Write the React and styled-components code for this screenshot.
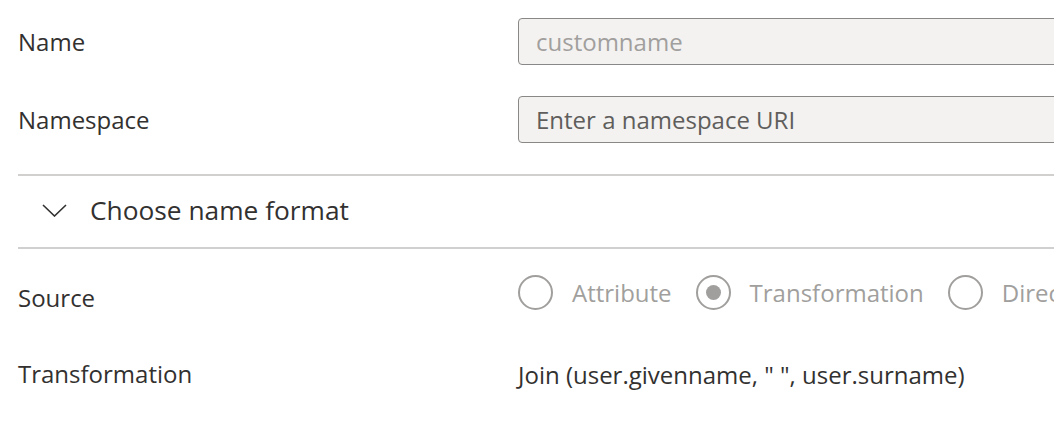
import React from "react";
import styled, { createGlobalStyle } from "styled-components";

const Global = createGlobalStyle`
  html, body { margin: 0; padding: 0; background: #ffffff; overflow: hidden; }
  body { font-family: "Open Sans", "Noto Sans", sans-serif; color: #323130; }
`;

const Page = styled.div`
  width: 1200px;
  padding: 18px 0 0 18px;
  box-sizing: border-box;
`;

const FieldRow = styled.div`
  display: grid;
  grid-template-columns: 500px 1fr;
  align-items: center;
  height: ${(p) => p.$h || 47}px;
  margin-top: ${(p) => p.$mt || 0}px;
`;

const Label = styled.div`
  font-size: 24px;
  line-height: 32px;
  color: #323130;
  margin-top: ${(p) => p.$shift || 0}px;
`;

const Input = styled.input`
  box-sizing: border-box;
  width: 620px;
  height: 47px;
  border: 1.5px solid #8a8886;
  border-radius: 4px;
  background: #f3f2f1;
  padding: 0 17px;
  font-family: inherit;
  font-size: 24px;
  color: ${(p) => (p.disabled ? "#a19f9d" : "#605e5c")};
  outline: none;
  &::placeholder { color: #605e5c; opacity: 1; }
  &:disabled { color: #a19f9d; }
`;

const Section = styled.div`
  margin-top: 31px;
  border-top: 2px solid #d2d0ce;
  border-bottom: 2px solid #d2d0ce;
  height: 75px;
  box-sizing: border-box;
  display: flex;
  align-items: center;
  gap: 23px;
  padding: 0 0 3px 24px;
`;

const SectionTitle = styled.div`
  font-size: 26.3px;
  color: #323130;
`;

const RadioGroup = styled.div`
  display: flex;
  align-items: center;
  gap: 24px;
`;

const RadioOption = styled.div`
  display: flex;
  align-items: center;
  gap: 19px;
  font-size: 24px;
  color: #a19f9d;
  white-space: nowrap;
`;

const RadioCircle = styled.span`
  box-sizing: border-box;
  width: 35px;
  height: 35px;
  border-radius: 50%;
  border: 2px solid #a19f9d;
  display: flex;
  align-items: center;
  justify-content: center;
  flex: none;
  &::after {
    content: "";
    display: ${(p) => (p.$checked ? "block" : "none")};
    width: 15px;
    height: 15px;
    border-radius: 50%;
    background: #a19f9d;
  }
`;

const Value = styled.div`
  font-size: 24px;
  color: #323130;
`;

const Chevron = () => (
  <svg width="25" height="13" viewBox="0 0 25 13" fill="none">
    <path d="M1 1 L12.5 12 L24 1" stroke="#323130" strokeWidth="1.6" />
  </svg>
);

export default function App() {
  return (
    <>
      <Global />
      <Page>
        <FieldRow>
          <Label>Name</Label>
          <Input disabled value="customname" readOnly />
        </FieldRow>
        <FieldRow $mt={31}>
          <Label>Namespace</Label>
          <Input placeholder="Enter a namespace URI" />
        </FieldRow>
        <Section>
          <Chevron />
          <SectionTitle>Choose name format</SectionTitle>
        </Section>
        <FieldRow $h={36} $mt={21}>
          <Label $shift={12}>Source</Label>
          <RadioGroup>
            <RadioOption><RadioCircle />Attribute</RadioOption>
            <RadioOption><RadioCircle $checked />Transformation</RadioOption>
            <RadioOption><RadioCircle />Directory schema extension</RadioOption>
          </RadioGroup>
        </FieldRow>
        <FieldRow $h={36} $mt={50}>
          <Label>Transformation</Label>
          <Value>Join (user.givenname, " ", user.surname)</Value>
        </FieldRow>
      </Page>
    </>
  );
}
